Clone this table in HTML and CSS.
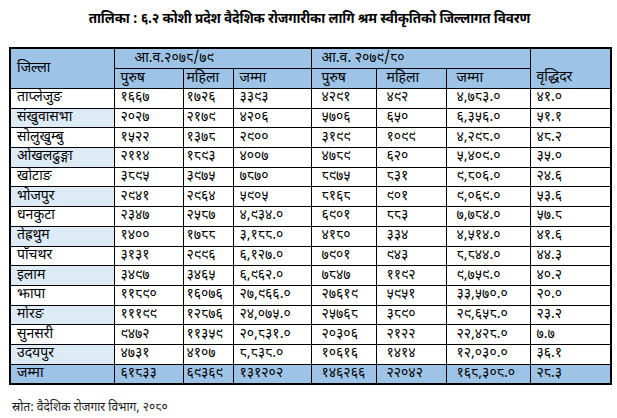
FILE: index.html
```html
<!DOCTYPE html>
<html lang="ne">
<head>
<meta charset="utf-8">
<title>कोशी प्रदेश वैदेशिक रोजगारी</title>
<link rel="stylesheet" href="styles.css">
</head>
<body>
<div class="page">
  <h1 class="title">तालिका : ६.२ कोशी प्रदेश वैदेशिक रोजगारीका लागि श्रम स्वीकृतिको जिल्लागत विवरण</h1>
  <table class="grid">
    <colgroup>
      <col class="c-dist"><col class="c-m1"><col class="c-f1"><col class="c-t1">
      <col class="c-m2"><col class="c-f2"><col class="c-t2"><col class="c-g">
    </colgroup>
    <thead>
      <tr class="h1">
        <th rowspan="2" class="hd-dist">जिल्ला</th>
        <th colspan="3" class="hd-y1">आ.व.२०७८/७९</th>
        <th colspan="3" class="hd-y2">आ.व. २०७९/८०</th>
        <th rowspan="2" class="hd-g">वृद्धिदर</th>
      </tr>
      <tr class="h2">
        <th class="p1">पुरुष</th><th class="p2">महिला</th><th class="p1">जम्मा</th>
        <th class="p3">पुरुष</th><th class="p3">महिला</th><th class="p3">जम्मा</th>
      </tr>
    </thead>
    <tbody>
      <tr><td class="d">ताप्लेजुङ</td><td class="p1">१६६७</td><td class="p2">१७२६</td><td class="p1">३३९३</td><td class="p3">४२९१</td><td class="p3">४९२</td><td class="p3">४,७८३.०</td><td class="p1">४१.०</td></tr>
      <tr class="alt"><td class="d">संखुवासभा</td><td class="p1">२०२७</td><td class="p2">२१७९</td><td class="p1">४२०६</td><td class="p3">५७०६</td><td class="p3">६५०</td><td class="p3">६,३५६.०</td><td class="p1">५१.१</td></tr>
      <tr><td class="d">सोलुखुम्बु</td><td class="p1">१५२२</td><td class="p2">१३७८</td><td class="p1">२९००</td><td class="p3">३१९९</td><td class="p3">१०९९</td><td class="p3">४,२९८.०</td><td class="p1">४८.२</td></tr>
      <tr class="alt"><td class="d">ओखलढुङ्गा</td><td class="p1">२११४</td><td class="p2">१८९३</td><td class="p1">४००७</td><td class="p3">४७८९</td><td class="p3">६२०</td><td class="p3">५,४०९.०</td><td class="p1">३५.०</td></tr>
      <tr><td class="d">खोटाङ</td><td class="p1">३८९५</td><td class="p2">३९७५</td><td class="p1">७८७०</td><td class="p3">८९७५</td><td class="p3">८३१</td><td class="p3">९,८०६.०</td><td class="p1">२४.६</td></tr>
      <tr class="alt"><td class="d">भोजपुर</td><td class="p1">२९४१</td><td class="p2">२९६४</td><td class="p1">५९०५</td><td class="p3">८१६८</td><td class="p3">९०१</td><td class="p3">९,०६९.०</td><td class="p1">५३.६</td></tr>
      <tr><td class="d">धनकुटा</td><td class="p1">२३४७</td><td class="p2">२५८७</td><td class="p1">४,९३४.०</td><td class="p3">६९०१</td><td class="p3">८८३</td><td class="p3">७,७८४.०</td><td class="p1">५७.८</td></tr>
      <tr class="alt"><td class="d">तेह्रथुम</td><td class="p1">१४००</td><td class="p2">१७८८</td><td class="p1">३,१८८.०</td><td class="p3">४१८०</td><td class="p3">३३४</td><td class="p3">४,५१४.०</td><td class="p1">४१.६</td></tr>
      <tr><td class="d">पाँचथर</td><td class="p1">३१३१</td><td class="p2">२९९६</td><td class="p1">६,१२७.०</td><td class="p3">७९०१</td><td class="p3">९४३</td><td class="p3">८,८४४.०</td><td class="p1">४४.३</td></tr>
      <tr class="alt"><td class="d">इलाम</td><td class="p1">३४९७</td><td class="p2">३४६५</td><td class="p1">६,९६२.०</td><td class="p3">७८४७</td><td class="p3">११९२</td><td class="p3">९,७५९.०</td><td class="p1">४०.२</td></tr>
      <tr><td class="d">झापा</td><td class="p1">११८९०</td><td class="p2">१६०७६</td><td class="p1">२७,९६६.०</td><td class="p3">२७६१९</td><td class="p3">५९५१</td><td class="p3">३३,५७०.०</td><td class="p1">२०.०</td></tr>
      <tr class="alt"><td class="d">मोरङ</td><td class="p1">१११९९</td><td class="p2">१२८७६</td><td class="p1">२४,०७५.०</td><td class="p3">२५७६८</td><td class="p3">३८९०</td><td class="p3">२९,६५८.०</td><td class="p1">२३.२</td></tr>
      <tr><td class="d">सुनसरी</td><td class="p1">९४७२</td><td class="p2">११३५९</td><td class="p1">२०,८३१.०</td><td class="p3">२०३०६</td><td class="p3">२१२२</td><td class="p3">२२,४२८.०</td><td class="p1">७.७</td></tr>
      <tr class="alt"><td class="d">उदयपुर</td><td class="p1">४७३१</td><td class="p2">४१०७</td><td class="p1">८,८३८.०</td><td class="p3">१०६१६</td><td class="p3">१४१४</td><td class="p3">१२,०३०.०</td><td class="p1">३६.१</td></tr>
      <tr class="total"><td class="d">जम्मा</td><td class="p1">६१८३३</td><td class="p2">६९३६९</td><td class="p1">१३१२०२</td><td class="p3">१४६२६६</td><td class="p3">२२०४२</td><td class="p3">१६८,३०८.०</td><td class="p1">२८.३</td></tr>
    </tbody>
  </table>
  <p class="source">स्रोत: वैदेशिक रोजगार विभाग, २०८०</p>
</div>
</body>
</html>
```

FILE: styles.css
```css
body {
  margin: 0;
  background: #ffffff;
  color: #000000;
  font-family: "Noto Sans Devanagari", "Lohit Devanagari", "FreeSans", "Noto Sans", sans-serif;
}

.page {
  padding: 8px 0 0 9px;
}

.title {
  margin: 0;
  width: 601px;
  height: 39px;
  font-size: 13.5px;
  line-height: 24px;
  font-weight: bold;
  letter-spacing: -0.15px;
  text-align: center;
}

.grid {
  border-collapse: collapse;
  table-layout: fixed;
  width: 601px;
  border: 2px solid #000000;
}

.c-dist { width: 104px; }
.c-m1 { width: 69px; }
.c-f1 { width: 50px; }
.c-t1 { width: 78px; }
.c-m2 { width: 65px; }
.c-f2 { width: 70px; }
.c-t2 { width: 84px; }
.c-g { width: 81px; }

.grid th,
.grid td {
  border: 1px solid #000000;
  font-size: 14px;
  font-weight: normal;
  text-align: left;
  white-space: nowrap;
  overflow: hidden;
  padding: 0 0 0 6px;
  line-height: 16px;
}

.grid thead th {
  background: #9dc3e6;
  height: 19px;
}

.grid tbody td {
  height: 18.7px;
}

.hd-dist { padding-left: 6px; vertical-align: middle; }
.hd-y1 { padding-left: 20px !important; }
.hd-y2 { padding-left: 10px !important; }
.hd-g { vertical-align: bottom; padding-bottom: 2px !important; }

.grid .p1 { padding-left: 6px; }
.grid .p2 { padding-left: 3px; }
.grid .p3 { padding-left: 10px; }
.grid .d { padding-left: 6px; }

.alt .d { background: #ddebf7; }

.total td { background: #9dc3e6; }

.source {
  margin: 15px 0 0 3px;
  font-size: 12px;
  color: #222222;
}
```
